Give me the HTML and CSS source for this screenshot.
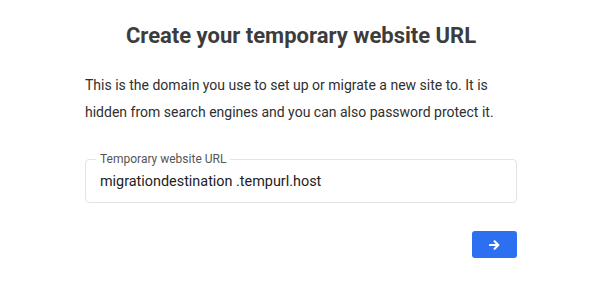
FILE: index.html
```html
<!DOCTYPE html>
<html lang="en">
<head>
<meta charset="utf-8">
<title>Create your temporary website URL</title>
<link rel="stylesheet" href="styles.css">
</head>
<body>
<main class="panel">
  <h1 class="title">Create your temporary website URL</h1>
  <p class="intro">This is the domain you use to set up or migrate a new site to. It is hidden from search engines and you can also password protect it.</p>
  <fieldset class="field">
    <legend class="field-label">Temporary website URL</legend>
    <div class="field-value">migrationdestination .tempurl.host</div>
  </fieldset>
  <div class="actions">
    <button class="next-btn" type="button" aria-label="Next">
      <svg width="11" height="10" viewBox="0 0 11 10" aria-hidden="true">
        <path d="M1 5 H9.2 M5.6 1.3 L9.3 5 L5.6 8.7" fill="none" stroke="#fff" stroke-width="2.2" stroke-linecap="round" stroke-linejoin="round"/>
      </svg>
    </button>
  </div>
</main>
</body>
</html>
```

FILE: styles.css
```css
html, body {
  margin: 0;
  padding: 0;
  background: #ffffff;
}

body {
  font-family: Roboto, "Liberation Sans", sans-serif;
  color: #333333;
}

.panel {
  width: 432px;
  margin-left: 85px;
  padding-top: 23px;
  display: flex;
  flex-direction: column;
}

.title {
  margin: 0;
  font-size: 22px;
  line-height: 26px;
  font-weight: 700;
  color: #3c3c3c;
  text-align: center;
}

.intro {
  margin: 23px 0 0;
  font-size: 14px;
  line-height: 27px;
  color: #2f2f2f;
}

.field {
  margin: 26px 0 0;
  padding: 6px 14px 10px;
  border: 1px solid #e3e3e3;
  border-radius: 4px;
  min-width: 0;
}

.field-label {
  margin-left: -4px;
  padding: 0 4px;
  font-size: 12px;
  line-height: 14px;
  color: #555555;
}

.field-value {
  font-size: 14.4px;
  line-height: 20px;
  color: #222222;
}

.actions {
  display: flex;
  justify-content: flex-end;
  margin-top: 28px;
}

.next-btn {
  width: 45px;
  height: 27px;
  padding: 0;
  border: none;
  border-radius: 3px;
  background: #2d6ff1;
  display: flex;
  align-items: center;
  justify-content: center;
  cursor: pointer;
}

.next-btn svg {
  display: block;
}
```
